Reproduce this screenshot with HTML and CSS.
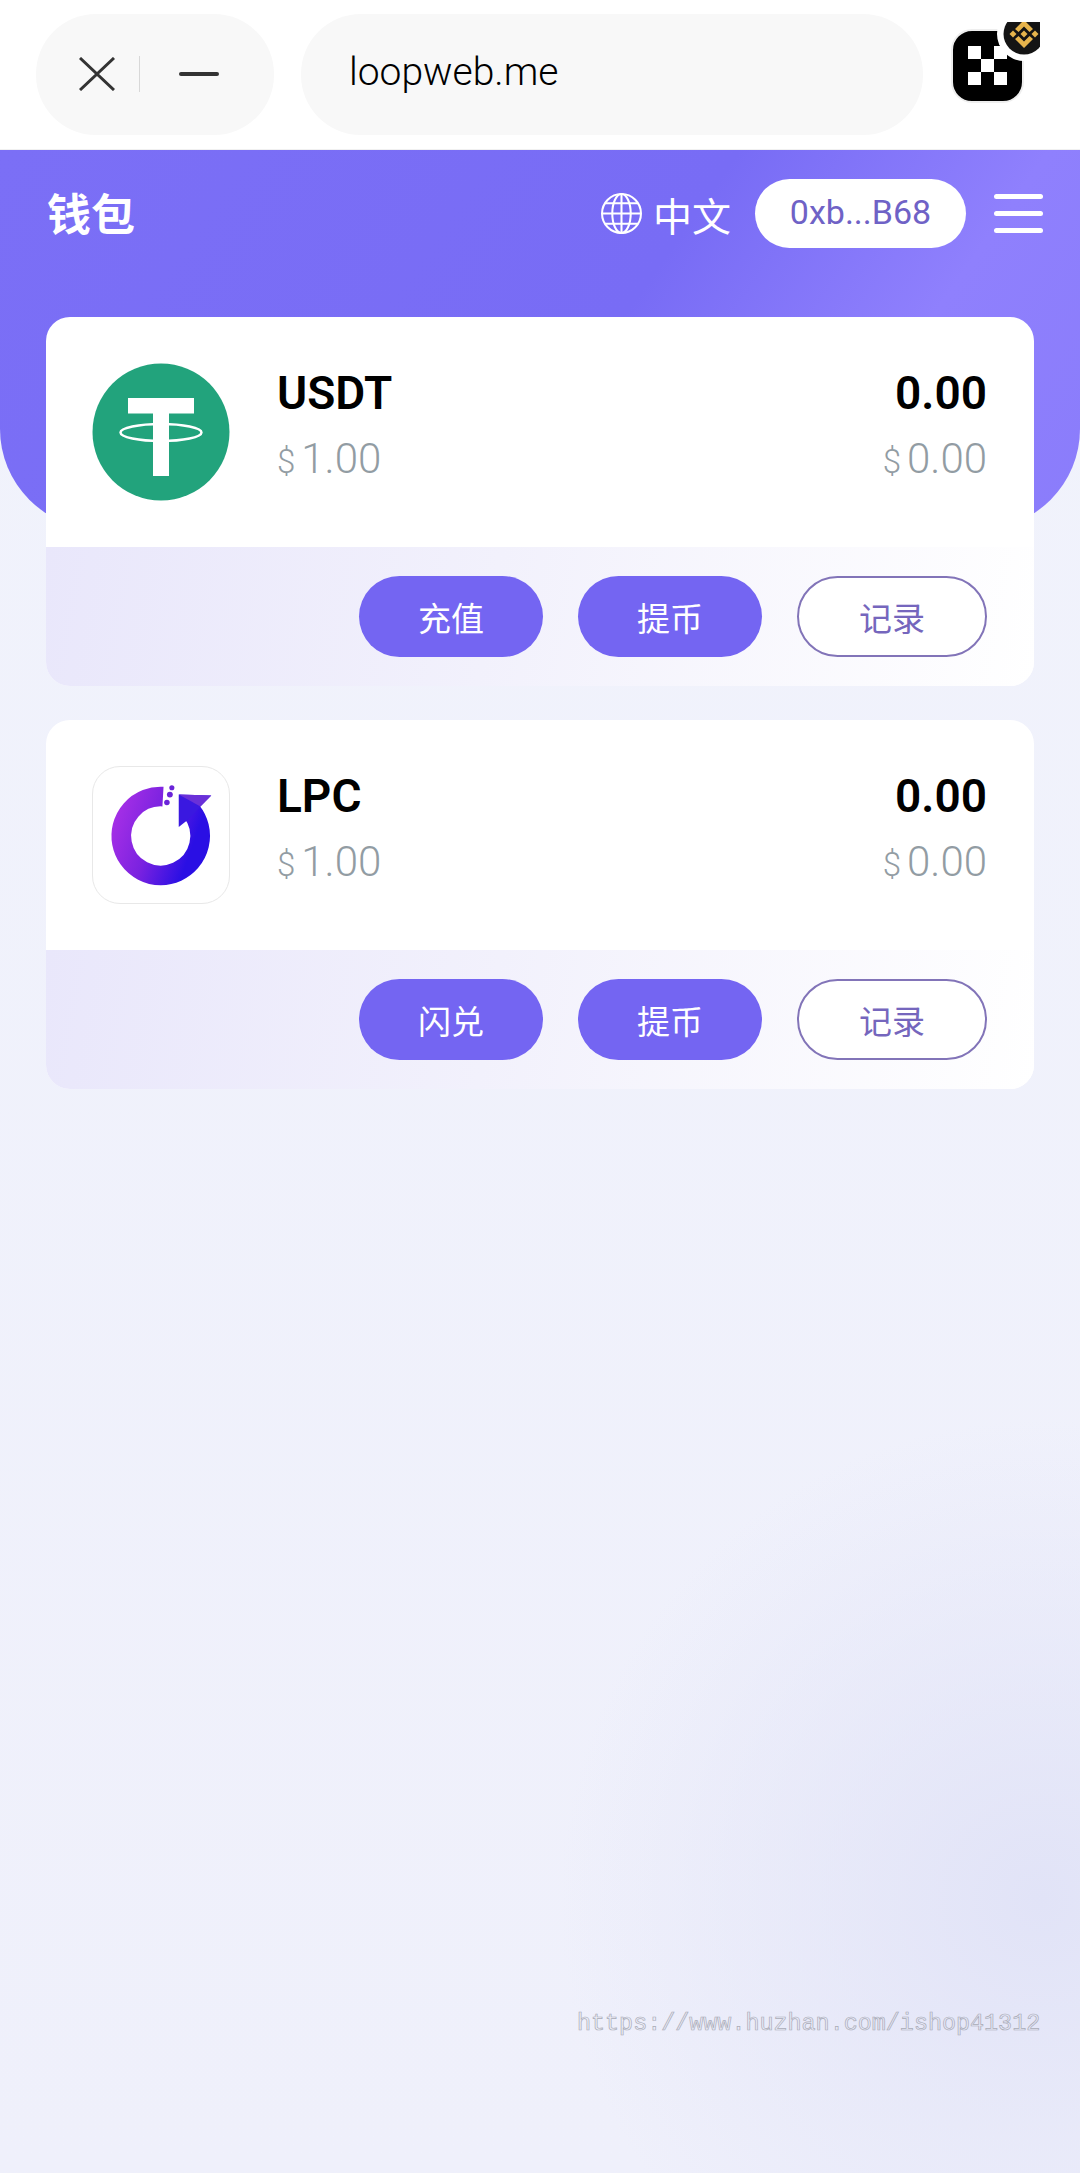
FILE: index.html
```html
<!DOCTYPE html>
<html lang="zh">
<head>
  <meta charset="UTF-8">
  <meta name="viewport" content="width=device-width, initial-scale=1.0">
  <title>钱包</title>
  <link rel="stylesheet" href="styles.css">
</head>
<body>
  <div class="browser-bar">
    <div class="window-controls">
      <svg class="icon-close" viewBox="0 0 36 34"><path d="M1 1 L35 33 M35 1 L1 33"/></svg>
      <span class="control-divider"></span>
      <span class="icon-minimize"></span>
    </div>
    <div class="url-pill">loopweb.me</div>
    <div class="wallet-badge">
      <svg viewBox="0 0 90 90" width="90" height="90">
        <rect x="2" y="8" width="71" height="72" rx="20" fill="#000" stroke="#eee" stroke-width="2"/>
        <g fill="#fff">
          <rect x="18" y="24" width="13" height="13"/>
          <rect x="44" y="24" width="13" height="13"/>
          <rect x="31" y="37" width="13" height="13"/>
          <rect x="18" y="50" width="13" height="13"/>
          <rect x="44" y="50" width="13" height="13"/>
        </g>
        <circle cx="74" cy="12" r="27" fill="#fff"/>
        <circle cx="74" cy="12" r="20.5" fill="#141414"/>
        <g fill="#e6b44c" transform="translate(74 12)">
          <path d="M0 -14 L9 -5 L5.5 -2 L0 -7.5 L-5.5 -2 L-9 -5 Z"/>
          <path d="M0 14 L9 5 L5.5 2 L0 7.5 L-5.5 2 L-9 5 Z"/>
          <path d="M0 -3.5 L3.5 0 L0 3.5 L-3.5 0 Z"/>
          <path d="M-11 -3.5 L-7.5 0 L-11 3.5 L-14.5 0 Z"/>
          <path d="M11 -3.5 L14.5 0 L11 3.5 L7.5 0 Z"/>
        </g>
      </svg>
    </div>
  </div>

  <header class="top-header">
    <h1>钱包</h1>
    <div class="header-right">
      <svg class="icon-globe" viewBox="0 0 40 40">
        <circle cx="20" cy="20" r="19"/>
        <ellipse cx="20" cy="20" rx="9" ry="19"/>
        <path d="M20 1 V39 M1 20 H39 M4 10 H36 M4 30 H36"/>
      </svg>
      <span class="lang">中文</span>
      <span class="address-pill">0xb...B68</span>
      <div class="hamburger"><span></span><span></span><span></span></div>
    </div>
  </header>

  <main class="wallet-list">
    <section class="coin-card">
      <div class="coin-info">
        <svg class="coin-icon" viewBox="0 0 138 138">
          <circle cx="69" cy="69" r="68.5" fill="#22a37c"/>
          <ellipse cx="69" cy="69.5" rx="40.5" ry="8.5" fill="none" stroke="#fff" stroke-width="2.5"/>
          <path fill="#fff" d="M36 35 H102 V50.5 H77 V113 H61 V50.5 H36 Z"/>
        </svg>
        <div class="coin-name">
          <strong>USDT</strong>
          <span class="price"><small>$</small>1.00</span>
        </div>
        <div class="coin-balance">
          <strong>0.00</strong>
          <span class="price"><small>$</small>0.00</span>
        </div>
      </div>
      <div class="coin-actions">
        <button class="btn">充值</button>
        <button class="btn">提币</button>
        <button class="btn btn-outline">记录</button>
      </div>
    </section>

    <section class="coin-card">
      <div class="coin-info">
        <div class="lpc-box">
          <svg class="coin-icon" viewBox="0 0 138 138">
            <defs>
              <linearGradient id="lpcRing" x1="0" y1="0" x2="1" y2="0.35">
                <stop offset="0" stop-color="#a52fe6"/>
                <stop offset="0.5" stop-color="#7a22e0"/>
                <stop offset="1" stop-color="#2a0fe4"/>
              </linearGradient>
            </defs>
            <path fill="none" stroke="url(#lpcRing)" stroke-width="20" d="M71 30 A40 40 0 1 0 100 45"/>
            <path fill="#3a18e0" d="M87 28 L120 29 L109 40 L97 53 L87 61 Z"/>
            <path fill="#6a30d8" d="M87 28 L120 29 L109 40 Z"/>
            <g fill="#6a24d8">
              <circle cx="80" cy="21" r="2.6"/>
              <circle cx="78" cy="28" r="3"/>
              <circle cx="75" cy="36" r="2.8"/>
            </g>
          </svg>
        </div>
        <div class="coin-name">
          <strong>LPC</strong>
          <span class="price"><small>$</small>1.00</span>
        </div>
        <div class="coin-balance">
          <strong>0.00</strong>
          <span class="price"><small>$</small>0.00</span>
        </div>
      </div>
      <div class="coin-actions">
        <button class="btn">闪兑</button>
        <button class="btn">提币</button>
        <button class="btn btn-outline">记录</button>
      </div>
    </section>
  </main>

  <div class="watermark">https://www.huzhan.com/ishop41312</div>
</body>
</html>
```

FILE: styles.css
```css
html, body {
  margin: 0;
  height: 2173px;
}
body {
  position: relative;
  overflow: hidden;
  font-family: Roboto, "Noto Sans CJK SC", sans-serif;
  color: #000;
  background:
    radial-gradient(circle at 1040px 1900px, #e1e3f7 0, rgba(225,227,247,0) 480px),
    linear-gradient(180deg, #f1f3fc 0%, #eff0fb 100%);
}
.browser-bar {
  height: 150px;
  box-sizing: border-box;
  padding-left: 36px;
  display: flex;
  align-items: center;
  gap: 27px;
  background-color: #fff;
  border-bottom: 1px solid #f0f0f0;
}
.window-controls {
  width: 238px;
  height: 121px;
  margin-top: -1px;
  display: flex;
  align-items: center;
  background-color: #f8f8f8;
  border-radius: 60px;
}
.icon-close {
  width: 36px;
  height: 34px;
  margin-left: 43px;
  fill: none;
  stroke: #333;
  stroke-width: 3;
}
.control-divider {
  width: 1px;
  height: 36px;
  margin-left: 24px;
  background-color: #d8d8d8;
}
.icon-minimize {
  width: 40px;
  height: 4px;
  margin-left: 39px;
  background-color: #333;
  border-radius: 2px;
}
.url-pill {
  width: 622px;
  height: 121px;
  margin-top: -1px;
  box-sizing: border-box;
  padding-left: 48px;
  line-height: 117px;
  font-size: 39px;
  font-weight: 300;
  background-color: #f8f8f8;
  border-radius: 60px;
}
.wallet-badge {
  width: 90px;
  height: 90px;
  margin-left: 0;
  margin-top: -16px;
}

.top-header {
  height: 379px;
  box-sizing: border-box;
  padding: 29px 37px 0 47px;
  display: flex;
  align-items: flex-start;
  justify-content: space-between;
  color: #fff;
  border-radius: 0 0 100px 100px;
  background: linear-gradient(125deg, #7b6ff6 0%, #786cf5 55%, #8f80fd 78%, #8a7cfb 100%);
}
.top-header h1 {
  margin: 9px 0 0;
  font-size: 44px;
  line-height: 56px;
  font-weight: 700;
}
.header-right {
  display: flex;
  align-items: center;
}
.icon-globe {
  width: 41px;
  height: 41px;
  fill: none;
  stroke: #fff;
  stroke-width: 2;
}
.lang {
  margin-left: 11px;
  font-size: 39px;
}
.address-pill {
  width: 211px;
  height: 69px;
  margin-left: 24px;
  line-height: 67px;
  text-align: center;
  font-size: 34px;
  color: #6f62c6;
  background-color: #fff;
  border-radius: 35px;
}
.hamburger {
  width: 49px;
  margin-left: 28px;
  display: flex;
  flex-direction: column;
  gap: 12px;
}
.hamburger span {
  height: 5px;
  background-color: #fff;
  border-radius: 3px;
}

.wallet-list {
  margin-top: -212px;
  padding: 0 46px;
  display: flex;
  flex-direction: column;
  gap: 34px;
  position: relative;
}
.coin-card {
  height: 369px;
  display: flex;
  flex-direction: column;
  background-color: #fff;
  border-radius: 24px;
  overflow: hidden;
}
.coin-info {
  height: 230px;
  box-sizing: border-box;
  padding: 46px 47px 0 46px;
  display: flex;
  align-items: flex-start;
}
.coin-icon {
  width: 138px;
  height: 138px;
  display: block;
  flex-shrink: 0;
}
.lpc-box {
  width: 138px;
  height: 138px;
  box-sizing: border-box;
  border: 1px solid #e8e8e8;
  border-radius: 28px;
  flex-shrink: 0;
}
.lpc-box .coin-icon {
  width: 136px;
  height: 136px;
}
.coin-name {
  margin-left: 47px;
  display: flex;
  flex-direction: column;
}
.coin-balance {
  margin-left: auto;
  display: flex;
  flex-direction: column;
  align-items: flex-end;
}
.coin-name strong, .coin-balance strong {
  font-size: 46px;
  line-height: 60px;
  font-weight: 600;
}
.price {
  margin-top: 6px;
  font-size: 42px;
  line-height: 60px;
  font-weight: 300;
  color: #929ca3;
}
.price small {
  margin-right: 6px;
  font-size: 33px;
}
.coin-actions {
  flex: 1;
  padding: 29px 47px 0 0;
  display: flex;
  justify-content: flex-end;
  align-items: flex-start;
  gap: 35px;
  background: linear-gradient(100deg, #e9e7fb 0%, #f2f1fc 45%, #ffffff 100%);
}
.btn {
  width: 184px;
  height: 81px;
  padding: 0;
  border: none;
  border-radius: 41px;
  font-family: inherit;
  font-size: 33px;
  color: #fff;
  background-color: #7465f2;
}
.btn-outline {
  width: 190px;
  color: #7566bd;
  background-color: #fff;
  border: 2px solid #8274b8;
}
.watermark {
  position: absolute;
  left: 577px;
  top: 2008px;
  font-family: "Liberation Mono", monospace;
  font-size: 23.4px;
  line-height: 32px;
  color: transparent;
  -webkit-text-stroke: 0.7px #a9abb6;
}
```
